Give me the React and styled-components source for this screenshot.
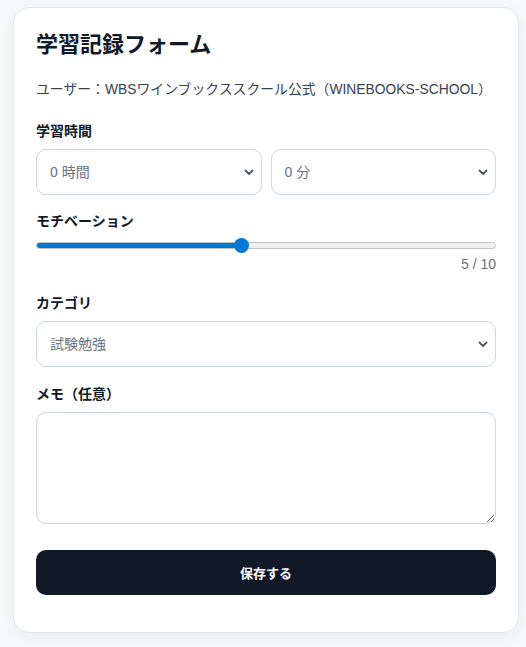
import React, { useState } from 'react'
import styled, { createGlobalStyle } from "styled-components";

const GlobalStyle = createGlobalStyle`
  html, body {
    margin: 0;
    padding: 0;
    background: #f8f9fa;
  }
  body {
    font-family: "Liberation Sans", "Noto Sans CJK JP", sans-serif;
    color: #111827;
  }
`;

const Page = styled.div`
  padding: 7px 9px 14px 13px;
`;

const Card = styled.form`
  width: 460px;
  padding: 22px 22px 37px;
  background: #ffffff;
  border: 1px solid #e5e7eb;
  border-radius: 16px;
  box-shadow: 0 4px 16px rgba(0, 0, 0, 0.06);
  display: flex;
  flex-direction: column;
`;

const Title = styled.h1`
  margin: 0 0 19px;
  font-size: 22px;
  line-height: 30px;
  font-weight: 700;
  color: #111827;
`;

const UserLine = styled.p`
  margin: 0 0 23px;
  font-size: 13.85px;
  line-height: 20px;
  color: #374151;
`;

const Label = styled.label`
  display: block;
  margin: ${(p) => p.$gap}px 0 9px;
  font-size: 14px;
  line-height: 18px;
  font-weight: 700;
  color: #111827;
`;

const Row = styled.div`
  display: flex;
  gap: 9px;
`;

const SelectWrap = styled.div`
  position: relative;
  flex: 1;
`;

const Select = styled.select`
  appearance: none;
  width: 100%;
  height: 46px;
  padding: 0 30px 0 13px;
  border: 1px solid #cbd5e1;
  border-radius: 10px;
  background: #ffffff;
  font-family: inherit;
  font-size: 14px;
  color: #6b7280;
  outline: none;
`;

const Chevron = styled.svg`
  position: absolute;
  right: 8px;
  top: 50%;
  width: 10px;
  height: 7px;
  margin-top: -3px;
  pointer-events: none;
`;

const Range = styled.input`
  appearance: none;
  -webkit-appearance: none;
  display: block;
  width: 100%;
  height: 16px;
  margin: -2px 0 0;
  background: transparent;

  &::-webkit-slider-runnable-track {
    height: 7px;
    border-radius: 4px;
    border: 1px solid #c2c2c2;
    box-sizing: border-box;
    background: ${(p) => `linear-gradient(to right, #0078d4 ${p.$pct}%, #efefef ${p.$pct}%)`};
  }
  &::-webkit-slider-thumb {
    -webkit-appearance: none;
    width: 15px;
    height: 15px;
    margin-top: -5px;
    border-radius: 50%;
    background: #0078d4;
    border: none;
  }
`;

const RangeValue = styled.div`
  margin-top: 3px;
  text-align: right;
  font-size: 14px;
  line-height: 16px;
  color: #6b7280;
`;

const Memo = styled.textarea`
  display: block;
  width: 100%;
  height: 112px;
  box-sizing: border-box;
  padding: 10px 13px;
  border: 1px solid #cbd5e1;
  border-radius: 10px;
  font-family: inherit;
  font-size: 14px;
  resize: vertical;
  outline: none;
`;

const SaveButton = styled.button`
  margin-top: 26px;
  height: 45px;
  border: none;
  border-radius: 10px;
  background: #111827;
  color: #ffffff;
  font-family: inherit;
  font-size: 13px;
  font-weight: 700;
  cursor: pointer;
`;

const Dropdown = ({ value, options }) => (
  <SelectWrap>
    <Select defaultValue={value}>
      {options.map((o) => <option key={o}>{o}</option>)}
    </Select>
    <Chevron viewBox="0 0 10 7" fill="none">
      <path d="M1.5 1.5 L5 5 L8.5 1.5" stroke="#4b5563" strokeWidth="1.8" strokeLinecap="round" strokeLinejoin="round" />
    </Chevron>
  </SelectWrap>
);

const App = () => {
  const [motivation, setMotivation] = useState(5);
  const pct = ((motivation - 1) / 9) * 100;

  return (
    <Page>
      <GlobalStyle />
      <Card onSubmit={(e) => e.preventDefault()}>
        <Title>学習記録フォーム</Title>
        <UserLine>ユーザー：WBSワインブックススクール公式（WINEBOOKS-SCHOOL）</UserLine>

        <Label $gap={0}>学習時間</Label>
        <Row>
          <Dropdown value="0 時間" options={["0 時間", "1 時間", "2 時間", "3 時間"]} />
          <Dropdown value="0 分" options={["0 分", "15 分", "30 分", "45 分"]} />
        </Row>

        <Label $gap={17}>モチベーション</Label>
        <Range
          type="range"
          min="1"
          max="10"
          value={motivation}
          $pct={pct}
          onChange={(e) => setMotivation(Number(e.target.value))}
        />
        <RangeValue>{motivation} / 10</RangeValue>

        <Label $gap={22}>カテゴリ</Label>
        <Dropdown value="試験勉強" options={["試験勉強", "テイスティング", "その他"]} />

        <Label $gap={18}>メモ（任意）</Label>
        <Memo />

        <SaveButton type="submit">保存する</SaveButton>
      </Card>
    </Page>
  );
};

export default App
